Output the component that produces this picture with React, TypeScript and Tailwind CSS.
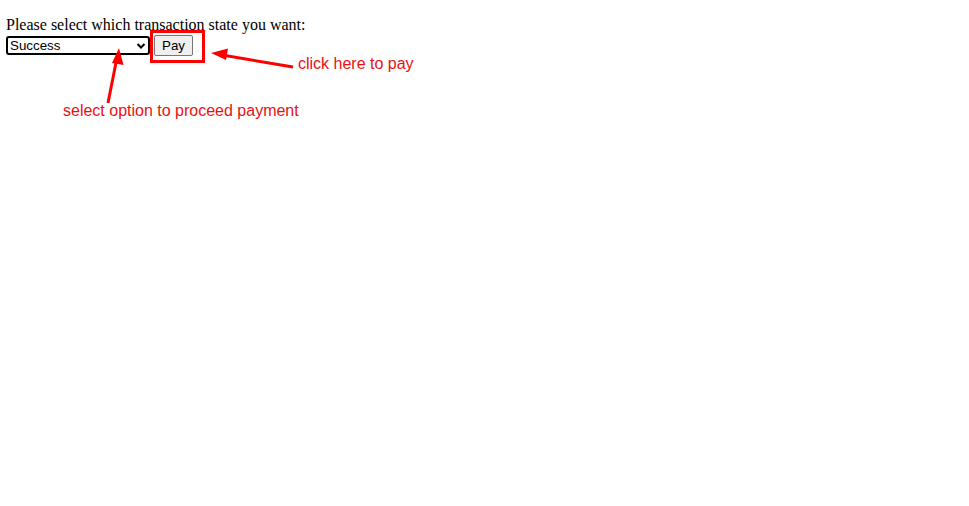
import React from "react";

export default function App() {
  return (
    <div className="relative w-[969px] h-[506px] bg-white overflow-hidden">
      <div className="pt-[15px] pl-[6px]">
        <p className="text-[16px] leading-[19px] text-black" style={{ fontFamily: '"Liberation Serif", serif' }}>
          Please select which transaction state you want:
        </p>
        <div className="flex items-center gap-[4px] mt-[1px]">
          <div className="relative w-[144px] h-[19px] border-2 border-black rounded-[3px] bg-white flex items-center pl-[2px]">
            <span className="text-[13.33px] leading-none text-black" style={{ fontFamily: '"Liberation Sans", Arial, sans-serif' }}>
              Success
            </span>
            <svg className="absolute right-[2px] top-[4px]" width="10" height="8" viewBox="0 0 10 8">
              <path d="M1.5 2 L5 5.5 L8.5 2" fill="none" stroke="black" strokeWidth="2" />
            </svg>
          </div>
          <button className="h-[21px] w-[39px] bg-[#efefef] border border-[#767676] rounded-[2px] text-[13.33px] leading-none text-black" style={{ fontFamily: '"Liberation Sans", Arial, sans-serif' }}>
            Pay
          </button>
        </div>
      </div>

      {/* annotation overlay */}
      <div className="absolute left-[150px] top-[30px] w-[55px] h-[33px] border-[3px] border-[#f00]" />
      <svg className="absolute left-0 top-0" width="969" height="506" viewBox="0 0 969 506">
        <line x1="293" y1="67" x2="222" y2="55" stroke="#f00" strokeWidth="3" />
        <polygon points="211,53 228,48.5 226,60" fill="#f00" />
        <line x1="108" y1="103" x2="116.5" y2="60" stroke="#f00" strokeWidth="3" />
        <polygon points="119,48 123.5,65 112,63" fill="#f00" />
      </svg>
      <div className="absolute left-[298px] top-[55px] text-[16px] leading-[18px] text-[#e81111] whitespace-nowrap" style={{ fontFamily: '"Liberation Sans", Arial, sans-serif' }}>
        click here to pay
      </div>
      <div className="absolute left-[63px] top-[102px] text-[16px] leading-[18px] text-[#e81111] whitespace-nowrap" style={{ fontFamily: '"Liberation Sans", Arial, sans-serif' }}>
        select option to proceed payment
      </div>
    </div>
  );
}
